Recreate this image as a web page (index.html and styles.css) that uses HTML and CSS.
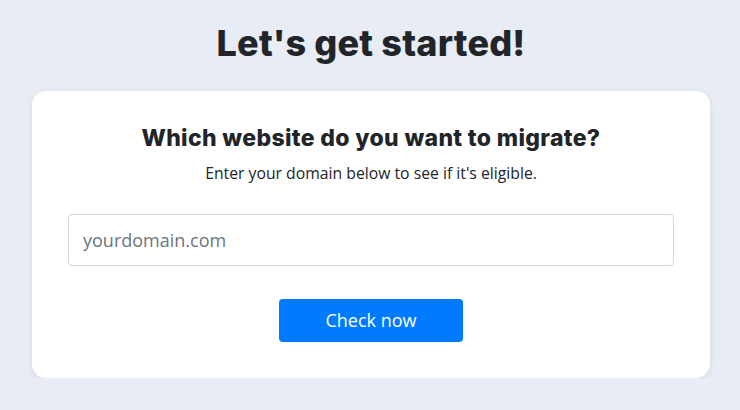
FILE: index.html
```html
<!DOCTYPE html>
<html lang="en">
<head>
    <meta charset="UTF-8">
    <meta name="viewport" content="width=device-width, initial-scale=1.0">
    <title>Migrate your website</title>
    <link rel="stylesheet" href="styles.css">
</head>
<body>
    <h1 class="page-title">Let's get started!</h1>

    <!-- Card with the domain check -->
    <div class="card">
        <h2 class="card-title">Which website do you want to migrate?</h2>
        <p class="card-text">Enter your domain below to see if it's eligible.</p>

        <input type="text" class="domain-input" placeholder="yourdomain.com">

        <div class="actions">
            <button class="check-btn">Check now</button>
        </div>
    </div>
</body>
</html>
```

FILE: styles.css
```css
/* Page */
body {
    margin: 0;
    padding: 0 30px 0 32px;
    background-color: #e8ecf5;
    font-family: "Open Sans", Arial, sans-serif;
    color: #212529;
}

/* Main title */
.page-title {
    margin: 20px 0 24px;
    text-align: center;
    font-family: Inter, "Open Sans", sans-serif;
    font-size: 36px;
    font-weight: 800;
    line-height: 1.3;
    letter-spacing: 0.2px;
    color: #212529;
}

/* Card */
.card {
    background-color: #fff;
    border-radius: 14px;
    padding: 30px 36px 36px;
    box-shadow: 0 2px 6px rgba(60, 70, 100, 0.12);
}

.card-title {
    margin: 0;
    text-align: center;
    font-family: Inter, "Open Sans", sans-serif;
    font-size: 23px;
    font-weight: 800;
    line-height: 1.5;
    letter-spacing: 0.35px;
}

.card-text {
    margin: 7px 0 28px;
    text-align: center;
    font-size: 15.75px;
    line-height: 1.5;
}

/* Domain field */
.domain-input {
    display: block;
    box-sizing: border-box;
    width: 100%;
    height: 52px;
    padding: 0 14px;
    border: 1px solid #ced4da;
    border-radius: 4px;
    font-family: "Open Sans", sans-serif;
    font-size: 18px;
    color: #495057;
}

.domain-input::placeholder {
    color: #6c757d;
}

/* Button */
.actions {
    margin-top: 33px;
    text-align: center;
}

.check-btn {
    width: 184px;
    height: 43px;
    border: none;
    border-radius: 4px;
    background-color: #007bff;
    color: #fff;
    font-family: "Open Sans", sans-serif;
    font-size: 18px;
    cursor: pointer;
}
```
